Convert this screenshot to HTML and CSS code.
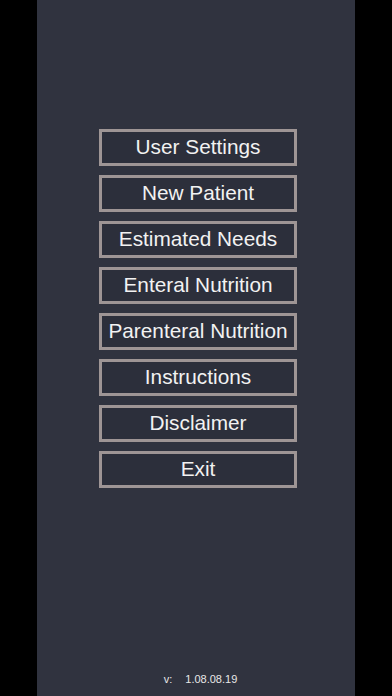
FILE: index.html
```html
<!DOCTYPE html>
<html>
<head>
<meta charset="utf-8">
<link rel="stylesheet" href="styles.css">
</head>
<body>
<div class="panel">
  <nav class="menu">
    <div class="btn">User Settings</div>
    <div class="btn">New Patient</div>
    <div class="btn">Estimated Needs</div>
    <div class="btn">Enteral Nutrition</div>
    <div class="btn">Parenteral Nutrition</div>
    <div class="btn">Instructions</div>
    <div class="btn">Disclaimer</div>
    <div class="btn">Exit</div>
  </nav>
  <div class="version"><span class="vlabel">v:</span><span>1.08.08.19</span></div>
</div>
</body>
</html>
```

FILE: styles.css
```css
html, body {
  margin: 0;
  padding: 0;
  background: #000;
  height: 696px;
  overflow: hidden;
}
.panel {
  width: 318px;
  height: 696px;
  margin-left: 37px;
  background: #30333f;
  display: flex;
  flex-direction: column;
  align-items: center;
  font-family: "Liberation Sans", Arial, sans-serif;
  color: #f2f2f2;
}
.menu {
  margin-top: 129px;
  margin-left: 4px;
  display: flex;
  flex-direction: column;
  gap: 9px;
}
.btn {
  box-sizing: border-box;
  width: 198px;
  height: 37px;
  padding-bottom: 1px;
  border: 3px solid #9e9595;
  background: #2c2f3b;
  display: flex;
  align-items: center;
  justify-content: center;
  font-size: 20.8px;
  line-height: 1;
}
.version {
  margin-top: auto;
  margin-bottom: 11px;
  margin-left: 9px;
  font-size: 11px;
  color: #e8e8e8;
  display: flex;
  gap: 13px;
}
```
